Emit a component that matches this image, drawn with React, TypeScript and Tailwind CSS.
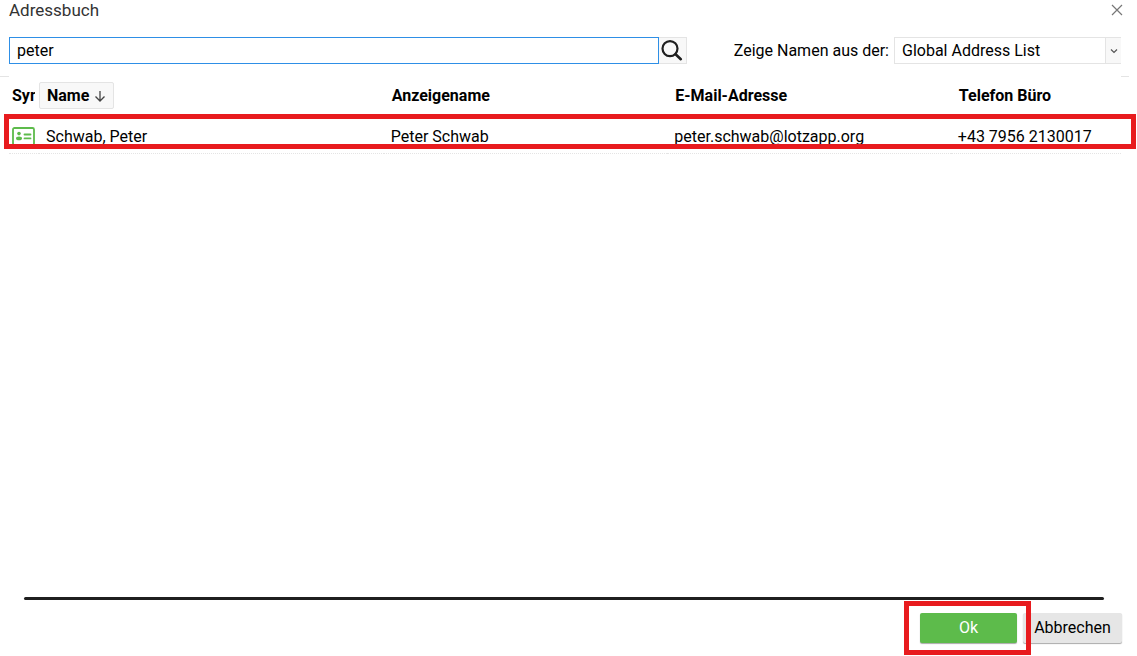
import { useState } from "react";

const contacts = [
  {
    name: "Schwab, Peter",
    display: "Peter Schwab",
    email: "peter.schwab@lotzapp.org",
    phone: "+43 7956 2130017",
  },
];

function CloseIcon() {
  return (
    <svg className="w-3 h-3" viewBox="0 0 12 12" fill="none" stroke="#777" strokeWidth="1.2">
      <path d="M1 1l10 10M11 1L1 11" />
    </svg>
  );
}

function SearchIcon() {
  return (
    <svg className="w-6 h-6" viewBox="0 0 24 24" fill="none" stroke="#1f1f1f">
      <circle cx="10" cy="9.6" r="7.5" strokeWidth="2.2" />
      <path d="M15.6 15.2L20.8 20.2" strokeWidth="2.6" strokeLinecap="round" />
    </svg>
  );
}

function CardIcon() {
  return (
    <svg className="block w-6 h-5" viewBox="0 0 24 20" fill="none" stroke="#5dbb4b">
      <rect x="1" y="1" width="21" height="17" rx="1.5" strokeWidth="1.8" />
      <circle cx="7" cy="6.6" r="1.8" fill="#5dbb4b" stroke="none" />
      <ellipse cx="7" cy="11.4" rx="3" ry="1.8" fill="#5dbb4b" stroke="none" />
      <path d="M12.5 7.5h6M12.5 11.4h6" strokeWidth="1.8" strokeLinecap="round" />
    </svg>
  );
}

function ArrowDown() {
  return (
    <svg className="w-3 h-3" viewBox="0 0 12 12" fill="none" stroke="#444" strokeWidth="1.3">
      <path d="M6 1v10M1.5 6.5L6 11l4.5-4.5" />
    </svg>
  );
}

export default function App() {
  const [query, setQuery] = useState("peter");

  return (
    <main className="flex flex-col min-h-screen bg-white text-base leading-5 text-black font-[Roboto,sans-serif]">
      <header className="flex items-center justify-between pl-[9px] pr-[14px] h-5">
        <h1 className="text-[17px] text-[#333]">Adressbuch</h1>
        <button aria-label="Schließen">
          <CloseIcon />
        </button>
      </header>

      <div className="flex items-center mt-[17px] pl-[9px] pr-4">
        <input
          aria-label="Suche"
          value={query}
          onChange={(e) => setQuery(e.target.value)}
          className="flex-1 min-w-0 h-[27px] px-[7px] border border-[#2e8fe6] outline-none"
        />
        <button
          aria-label="Suchen"
          className="flex items-center justify-center w-7 h-[27px] bg-[#f8f8f8] border border-l-0 border-[#e4e4e4]"
        >
          <SearchIcon />
        </button>
        <label htmlFor="list" className="ml-[47px] mr-[5px]">
          Zeige Namen aus der:
        </label>
        <div className="relative w-[227px]">
          <select
            id="list"
            className="block w-full h-[27px] pl-[7px] appearance-none bg-white border border-r-0 border-[#e4e4e4]"
          >
            <option>Global Address List</option>
          </select>
          <span className="absolute right-0 inset-y-0 flex items-center justify-center w-4 bg-[#f8f8f8] border-l border-y border-[#e4e4e4] pointer-events-none">
            <svg className="w-2 h-2" viewBox="0 0 8 8" fill="none" stroke="#555" strokeWidth="1.2">
              <path d="M1 2.5l3 3 3-3" />
            </svg>
          </span>
        </div>
      </div>

      <div className="flex justify-between mt-3 mr-2">
        <span className="w-[9px] h-px bg-[#e4e4e4]" />
        <span className="w-2 h-px bg-[#e4e4e4]" />
      </div>

      <section className="flex-1 pl-[9px] pr-4 pt-[5px]">
        <table className="w-full table-fixed border-separate border-spacing-0 text-left">
          <colgroup>
            <col className="w-[30px]" />
            <col className="w-[31%]" />
            <col className="w-[25.5%]" />
            <col className="w-[25.5%]" />
            <col />
          </colgroup>
          <thead>
            <tr>
              <th className="p-0 h-[27px] align-middle">
                <div className="w-[26px] pl-[3px] overflow-hidden whitespace-nowrap">Sym</div>
              </th>
              <th className="p-0">
                <button className="flex items-center gap-[5px] h-[27px] px-[7px] font-bold bg-[#f8f8f8] border border-[#e4e4e4] rounded-xs">
                  Name
                  <ArrowDown />
                </button>
              </th>
              <th className="p-0 pl-2">Anzeigename</th>
              <th className="p-0 pl-2">E-Mail-Adresse</th>
              <th className="p-0 pl-2">Telefon Büro</th>
            </tr>
          </thead>
          <tbody className="before:block before:h-[10px]">
            {contacts.map((c) => (
              <tr key={c.email} className="relative [&>td]:pt-[2px] [&>td]:border-b [&>td]:border-dotted [&>td]:border-[#e4e4e4]">
                <td className="p-0 pl-[3px] h-[35px]">
                  <CardIcon />
                  {/* highlighted row */}
                  <div className="absolute -top-[5px] bottom-[5px] -left-[5px] -right-[15px] border-5 border-[#e81b1e] pointer-events-none" />
                </td>
                <td className="p-0 pl-[7px]">{c.name}</td>
                <td className="p-0 pl-[7px]">{c.display}</td>
                <td className="p-0 pl-[7px]">{c.email}</td>
                <td className="p-0 pl-[7px]">{c.phone}</td>
              </tr>
            ))}
          </tbody>
        </table>
      </section>

      <footer className="pb-[13px]">
        <hr className="ml-6 mr-[33px] h-[3px] border-0 rounded-full bg-[#1f1f1f]" />
        <div className="flex justify-end gap-[6px] mt-[13px] pr-[15px]">
          <div className="relative z-10">
            <button className="block w-[97px] h-[30px] text-white bg-[#5dbb4b] rounded-xs shadow-[0_1px_1px_#aaa]">
              Ok
            </button>
            <div className="absolute -inset-y-3 -left-4 -right-[14px] border-5 border-[#e81b1e] pointer-events-none" />
          </div>
          <button className="w-[99px] h-[30px] bg-[#e6e6e6] rounded-xs shadow-[0_1px_1px_#aaa]">
            Abbrechen
          </button>
        </div>
      </footer>
    </main>
  );
}
